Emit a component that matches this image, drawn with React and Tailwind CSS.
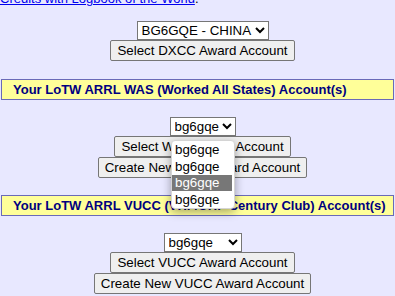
import React from "react";

const ctrl = "text-[13.333px] leading-[15px] text-black font-['Liberation_Sans',Arial,sans-serif]";
const btn = `${ctrl} h-[21px] px-[6px] bg-[#efefef] border border-[#767676] rounded-[2px] whitespace-nowrap`;
const sel = `${ctrl} h-[19px] bg-white border border-[#767676] rounded-none`;

const Bar = ({ children }) => (
  <div className="ml-[1px] w-[393px] h-[21px] bg-[#ffff99] border border-[#6a6ab8] pl-[11px] flex items-center">
    <span className="text-[13px] font-bold text-[#000080] whitespace-nowrap">{children}</span>
  </div>
);

const Popup = () => {
  const items = ["bg6gqe", "bg6gqe", "bg6gqe", "bg6gqe"];
  return (
    <div className="absolute left-[171px] top-[140px] w-[64px] bg-white rounded-[4px] border border-[#d4d4d4] shadow-[0_3px_10px_rgba(0,0,0,0.35)] overflow-hidden">
      {items.map((item, i) => (
        <div
          key={i}
          className={`${ctrl} h-[16.75px] pl-[3px] flex items-center ${
            i === 2 ? "bg-[#777777] text-white mr-[2px]" : ""
          }`}
        >
          {item}
        </div>
      ))}
    </div>
  );
};

export default function App() {
  return (
    <div className="relative w-[395px] h-[296px] overflow-hidden bg-[#e8e8ff] font-['Liberation_Sans',Arial,sans-serif] text-[13px] text-black">
      <div className="-mt-[9px] h-[15px] leading-[15px] whitespace-nowrap">
        <a href="#" className="text-[#0000ee] underline">
          Credits with Logbook of the World
        </a>
        .
      </div>

      {/* DXCC */}
      <div className="mt-[15px] pl-[10px] flex flex-col items-center">
        <select className={`${sel} w-[132px]`} defaultValue="BG6GQE - CHINA">
          <option>BG6GQE - CHINA</option>
        </select>
        <button className={btn}>Select DXCC Award Account</button>
      </div>

      {/* WAS */}
      <div className="mt-[18px]">
        <Bar>Your LoTW ARRL WAS (Worked All States) Account(s)</Bar>
      </div>
      <div className="mt-[17px] pl-[10px] flex flex-col items-center">
        <select className={`${sel} w-[66px]`} defaultValue="bg6gqe">
          <option>bg6gqe</option>
        </select>
        <button className={btn}>Select WAS Award Account</button>
        <button className={btn}>Create New WAS Award Account</button>
      </div>

      {/* VUCC */}
      <div className="mt-[17px]">
        <Bar>Your LoTW ARRL VUCC (VHF/UHF Century Club) Account(s)</Bar>
      </div>
      <div className="mt-[17px] pl-[10px] flex flex-col items-center">
        <select className={`${sel} w-[78px]`} defaultValue="bg6gqe">
          <option>bg6gqe</option>
        </select>
        <button className={btn}>Select VUCC Award Account</button>
        <button className={btn}>Create New VUCC Award Account</button>
      </div>

      <Popup />
    </div>
  );
}
